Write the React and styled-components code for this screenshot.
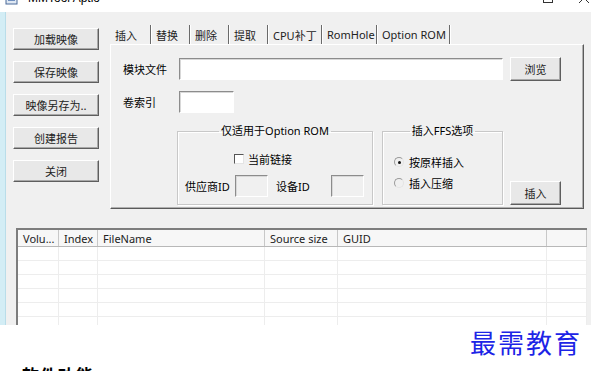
import React from 'react';
import styled, { createGlobalStyle } from 'styled-components';

const GlobalStyle = createGlobalStyle`
  body {
    margin: 0;
    background: #ffffff;
    font-family: "Noto Sans", "Noto Sans CJK SC", sans-serif;
    font-size: 11px;
    color: #000;
  }
`;

const Page = styled.div`
  width: 591px;
  height: 371px;
  overflow: hidden;
  display: flex;
  flex-direction: column;
`;

// only the lower part of the title bar is in the shot
const TitleBar = styled.div`
  height: 12px;
  overflow: hidden;
  display: flex;
  align-items: flex-end;
  background: #fff;
`;
const TitleInner = styled.div`
  height: 28px;
  flex: none;
  width: 100%;
  display: flex;
  align-items: center;
  padding-left: 5px;
  box-sizing: border-box;
`;
const TitleText = styled.span`
  margin-left: 10px;
  font-size: 12px;
  line-height: 14px;
  font-family: "Liberation Sans", sans-serif;
`;
const Controls = styled.div`
  margin-left: auto;
  display: flex;
  align-items: center;
  gap: 26px;
  padding-right: 2px;
`;

const Window = styled.div`
  height: 313px;
  background: #f0f0f0;
  border-left: 5px solid #d3edf5;
  box-shadow: inset 1px 0 0 #b9dde9;
  overflow: hidden;
  display: flex;
  flex-direction: column;
`;

const TopRow = styled.div`
  display: flex;
  align-items: flex-start;
`;

const LeftCol = styled.div`
  display: flex;
  flex-direction: column;
  gap: 11px;
  padding: 16px 0 0 8px;
`;

const Button = styled.div`
  width: ${p => p.$w || 86}px;
  height: ${p => p.$h || 22}px;
  box-sizing: border-box;
  display: flex;
  align-items: center;
  justify-content: center;
  background: #e8e8e8;
  border-top: 1px solid #ffffff;
  border-left: 1px solid #ffffff;
  border-right: 1px solid #5e5e5e;
  border-bottom: 1px solid #5e5e5e;
  box-shadow: inset -1px -1px 0 #a8a8a8;
  font-family: "Noto Sans CJK SC", sans-serif;
  font-size: 11px;
  color: #222;
`;

const TabArea = styled.div`
  margin-left: 11px;
  padding-top: 13px;
  display: flex;
  flex-direction: column;
`;

const TabStrip = styled.div`
  display: flex;
  height: 19px;
`;
const Tab = styled.div`
  width: ${p => p.$w}px;
  box-sizing: border-box;
  padding-left: 5px;
  display: flex;
  align-items: center;
  border-right: 1px solid #6a6a6a;
  box-shadow: 1px 0 0 #ffffff;
  font-family: "Noto Sans", "Noto Sans CJK SC", sans-serif;
  font-size: 11px;
  color: #222;
`;

const Panel = styled.div`
  width: 474px;
  height: 165px;
  box-sizing: border-box;
  border-left: 1px solid #ffffff;
  border-top: 1px solid #ffffff;
  border-right: 1px solid #5a5a5a;
  border-bottom: 1px solid #5a5a5a;
  box-shadow: inset -1px -1px 0 #b0b0b0;
  padding: 12px 0 0 12px;
  display: flex;
  flex-direction: column;
`;

const FieldRow = styled.div`
  display: flex;
  align-items: center;
  margin-top: ${p => p.$mt || 0}px;
`;
const Label = styled.span`
  width: 56px;
  font-family: "Noto Sans CJK SC", sans-serif;
  font-size: 11px;
`;
const Input = styled.div`
  width: ${p => p.$w}px;
  height: 22px;
  box-sizing: border-box;
  background: ${p => (p.$disabled ? '#f0f0f0' : '#ffffff')};
  border-top: 1px solid #8c8c8c;
  border-left: 1px solid #8c8c8c;
  border-right: 1px solid #ffffff;
  border-bottom: 1px solid #ffffff;
  box-shadow: inset 1px 1px 0 #d8d8d8;
`;
const Spacer = styled.span`
  width: ${p => p.$w}px;
`;

const GroupRow = styled.div`
  display: flex;
  align-items: flex-end;
  margin-top: 11px;
  padding-left: 54px;
`;
const Group = styled.fieldset`
  margin: 0 ${p => p.$mr}px 0 0;
  padding: 0;
  width: ${p => p.$w}px;
  height: 81px;
  box-sizing: border-box;
  border: 1px solid #c8c8c8;
  box-shadow: 1px 1px 0 #ffffff, inset 1px 1px 0 #ffffff;
  display: flex;
  flex-direction: column;
`;
const Legend = styled.legend`
  margin: 0 auto;
  padding: 0 2px;
  line-height: 14px;
  font-family: "Noto Sans", "Noto Sans CJK SC", sans-serif;
  font-size: 11px;
`;
const CheckRow = styled.div`
  display: flex;
  align-items: center;
  gap: 4px;
  margin: 13px 0 0 56px;
  font-family: "Noto Sans CJK SC", sans-serif;
`;
const CheckBox = styled.span`
  width: 10px;
  height: 10px;
  box-sizing: border-box;
  background: #fff;
  border-top: 1px solid #555;
  border-left: 1px solid #555;
  border-right: 1px solid #e4e4e4;
  border-bottom: 1px solid #e4e4e4;
`;
const IdRow = styled.div`
  display: flex;
  align-items: center;
  margin: 8px 0 0 7px;
  font-family: "Noto Sans", "Noto Sans CJK SC", sans-serif;
`;
const IdLabel = styled.span`
  width: ${p => p.$w}px;
`;
const RadioList = styled.div`
  display: flex;
  flex-direction: column;
  gap: 7px;
  margin: 17px 0 0 11px;
`;
const RadioRow = styled.div`
  display: flex;
  align-items: center;
  gap: 5px;
  height: 14px;
  font-family: "Noto Sans CJK SC", sans-serif;
`;
const Radio = styled.span`
  width: 8px;
  height: 8px;
  border-radius: 50%;
  border: 1px solid #9a9a9a;
  border-right-color: #e4e4e4;
  border-bottom-color: #e4e4e4;
  display: flex;
  align-items: center;
  justify-content: center;
  &::after {
    content: '';
    width: 3px;
    height: 3px;
    border-radius: 50%;
    background: ${p => (p.$on ? '#111' : 'transparent')};
  }
`;

const Table = styled.div`
  margin: 19px 0 0 11px;
  width: 571px;
  border-left: 2px solid #7d7d7d;
  border-top: 2px solid #7d7d7d;
  background: #ffffff;
  flex: 1;
  box-sizing: border-box;
`;
const Row = styled.div`
  display: grid;
  grid-template-columns: 41px 39px 167px 73px 209px 40px;
  height: ${p => (p.$head ? 17 : 14)}px;
  background: ${p => (p.$head ? '#f7f7f7' : '#ffffff')};
  border-bottom: 1px solid ${p => (p.$head ? '#b8b8b8' : '#ededed')};
  box-sizing: border-box;
`;
const Cell = styled.div`
  border-right: 1px solid ${p => (p.$head ? '#c8c8c8' : '#ededed')};
  padding-left: 5px;
  display: flex;
  align-items: center;
  font-family: "Noto Sans", sans-serif;
  font-size: 11px;
  color: #222;
  white-space: nowrap;
  overflow: hidden;
`;

const Footer = styled.div`
  height: 46px;
  display: flex;
  justify-content: space-between;
  overflow: hidden;
  padding: 0 9px 0 22px;
`;
const Heading = styled.div`
  align-self: flex-end;
  margin-bottom: -14px;
  font-family: "Noto Sans CJK SC", sans-serif;
  font-weight: 700;
  font-size: 17px;
  line-height: 20px;
  letter-spacing: 1px;
`;
const Watermark = styled.div`
  font-family: "Noto Sans CJK SC", serif;
  font-size: 26px;
  line-height: 34px;
  letter-spacing: 2px;
  color: #1c24e6;
`;

const tabs = [
  ['插入', 41], ['替换', 39], ['删除', 39], ['提取', 39],
  ['CPU补丁', 54], ['RomHole', 55], ['Option ROM', 73],
];
const headers = ['Volu...', 'Index', 'FileName', 'Source size', 'GUID', ''];

function AppIcon() {
  return (
    <svg width="13" height="13" viewBox="0 0 13 13">
      <rect x="1" y="1" width="11" height="11" fill="#dfe8f3" stroke="#4a6a9a" />
      <rect x="3" y="4" width="7" height="5" fill="#6f8fbf" />
    </svg>
  );
}

export default function App() {
  return (
    <Page>
      <GlobalStyle />
      <TitleBar>
        <TitleInner>
          <AppIcon />
          <TitleText>MMTool Aptio</TitleText>
          <Controls>
            <svg width="10" height="10"><line x1="0" y1="5.5" x2="10" y2="5.5" stroke="#333" /></svg>
            <svg width="10" height="10"><rect x="0.5" y="0.5" width="9" height="9" fill="none" stroke="#333" /></svg>
            <svg width="10" height="10"><path d="M0 0L10 10M10 0L0 10" stroke="#333" /></svg>
          </Controls>
        </TitleInner>
      </TitleBar>

      <Window>
        <TopRow>
          <LeftCol>
            <Button>加载映像</Button>
            <Button>保存映像</Button>
            <Button>映像另存为..</Button>
            <Button>创建报告</Button>
            <Button>关闭</Button>
          </LeftCol>

          <TabArea>
            <TabStrip>
              {tabs.map(([t, w]) => <Tab key={t} $w={w}>{t}</Tab>)}
            </TabStrip>
            <Panel>
              <FieldRow>
                <Label>模块文件</Label>
                <Input $w={324} />
                <Spacer $w={7} />
                <Button $w={51} $h={24}>浏览</Button>
              </FieldRow>
              <FieldRow $mt={10}>
                <Label>卷索引</Label>
                <Input $w={55} />
              </FieldRow>
              <GroupRow>
                <Group $w={196} $mr={9}>
                  <Legend>仅适用于Option ROM</Legend>
                  <CheckRow><CheckBox />当前链接</CheckRow>
                  <IdRow>
                    <IdLabel $w={50}>供应商ID</IdLabel>
                    <Input $w={33} $disabled />
                    <Spacer $w={8} />
                    <IdLabel $w={55}>设备ID</IdLabel>
                    <Input $w={33} $disabled />
                  </IdRow>
                </Group>
                <Group $w={121} $mr={7}>
                  <Legend>插入FFS选项</Legend>
                  <RadioList>
                    <RadioRow><Radio $on />按原样插入</RadioRow>
                    <RadioRow><Radio />插入压缩</RadioRow>
                  </RadioList>
                </Group>
                <Button $w={51} $h={24}>插入</Button>
              </GroupRow>
            </Panel>
          </TabArea>
        </TopRow>

        <Table>
          <Row $head>
            {headers.map((h, i) => <Cell key={i} $head>{h}</Cell>)}
          </Row>
          {[0, 1, 2, 3, 4, 5].map(r => (
            <Row key={r}>
              {headers.map((h, i) => <Cell key={i} />)}
            </Row>
          ))}
        </Table>
      </Window>

      <Footer>
        <Heading>软件功能</Heading>
        <Watermark>最需教育</Watermark>
      </Footer>
    </Page>
  );
}
